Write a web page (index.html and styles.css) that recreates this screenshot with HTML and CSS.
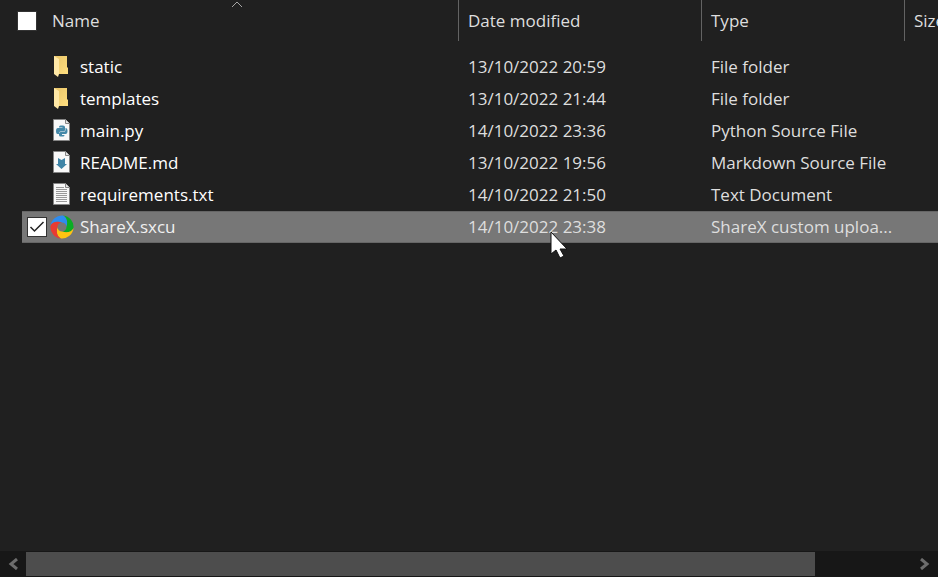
FILE: index.html
```html
<!DOCTYPE html>
<html lang="en">
<head>
<meta charset="utf-8">
<title>Files</title>
<link rel="stylesheet" href="styles.css">
</head>
<body>
<svg class="defs" aria-hidden="true">
  <defs>
    <linearGradient id="fold" x1="0" x2="1" y1="0" y2="1"><stop offset="0" stop-color="#e9c568"/><stop offset="1" stop-color="#ffdf80"/></linearGradient>
    <symbol id="folder" viewBox="-1 0 24 24">
      <path d="M3 1h13v11l1 1v6H3z" fill="url(#fold)"/>
      <path d="M3 1l5 3v15l-1 3-4-3z" fill="#ffe8a6"/>
    </symbol>
    <g id="page">
      <path d="M2.500 1.500h12l4 4v17h-16z" fill="#f8f8f8" stroke="#858585"/>
      <path d="M14.500 1.500v4h4" fill="#e4e4e4" stroke="#858585"/>
    </g>
    <symbol id="python" viewBox="-1 1 24 24">
      <use href="#page"/>
      <path d="M8 9q0-1.500 1.500-1.500h2.500q2 0 2 1.500v3q0 1.500-1.500 1.500H9.500Q8 13.500 8 15v1H6.500Q5 16 5 13t2-3h4.500V9.500H8z" fill="#4488a8"/>
      <path d="M13.500 17q0 1.500-1.500 1.500H9.500Q8 18.500 8 17v-1.500q0-1.500 1.500-1.500H12.500q2 0 2-2V10q2 0 2 3t-2 3H11v1z" fill="#4488a8"/>
    </symbol>
    <symbol id="markdown" viewBox="-1 1 24 24">
      <use href="#page"/>
      <path d="M7 8l3.500 2L14 8v6h2l-5.500 5L5 14h2z" fill="#3f84a6"/>
    </symbol>
    <symbol id="text" viewBox="-1 1 24 24">
      <use href="#page"/>
      <path d="M5 5.500h8M5 7.500h11M5 9.500h11M5 11.500h11M5 13.500h11M5 15.500h11M5 17.500h11M5 19.500h11" stroke="#999"/>
    </symbol>
    <path id="blade" d="M.5 11A11.500 11.500 0 0 1 13 .5C17 2 18 7 16.500 12A4.500 4.500 0 0 0 12 7.500C7 6 2 7 .5 11z"/>
    <symbol id="sharex" viewBox="0 0 24 24">
      <use href="#blade" fill="#2d8cf0"/>
      <use href="#blade" fill="#0aad24" transform="rotate(90 12 12)"/>
      <use href="#blade" fill="#ffc411" transform="rotate(180 12 12)"/>
      <use href="#blade" fill="#e83b32" transform="rotate(270 12 12)"/>
    </symbol>
  </defs>
</svg>
<main class="explorer">
  <div class="list">
    <table class="files">
      <colgroup><col class="c-pick"><col class="c-name"><col class="c-date"><col class="c-type"><col class="c-size"></colgroup>
      <thead>
        <tr>
          <th class="pick"><input type="checkbox" class="all" aria-label="Select all"></th>
          <th class="name">Name<svg class="sort" viewBox="0 0 12 7" aria-hidden="true"><path d="M1 6l5-5 5 5" fill="none" stroke="#a5a5a5"/></svg></th>
          <th class="ruled">Date modified</th>
          <th class="ruled">Type</th>
          <th class="ruled">Size</th>
        </tr>
      </thead>
      <tbody>
        <tr><td class="pick"></td><td class="name"><span class="file"><svg class="icon"><use href="#folder"/></svg>static</span></td><td>13/10/2022 20:59</td><td>File folder</td><td></td></tr>
        <tr><td class="pick"></td><td class="name"><span class="file"><svg class="icon"><use href="#folder"/></svg>templates</span></td><td>13/10/2022 21:44</td><td>File folder</td><td></td></tr>
        <tr><td class="pick"></td><td class="name"><span class="file"><svg class="icon"><use href="#python"/></svg>main.py</span></td><td>14/10/2022 23:36</td><td>Python Source File</td><td></td></tr>
        <tr><td class="pick"></td><td class="name"><span class="file"><svg class="icon"><use href="#markdown"/></svg>README.md</span></td><td>13/10/2022 19:56</td><td>Markdown Source File</td><td></td></tr>
        <tr><td class="pick"></td><td class="name"><span class="file"><svg class="icon"><use href="#text"/></svg>requirements.txt</span></td><td>14/10/2022 21:50</td><td>Text Document</td><td></td></tr>
        <tr class="selected"><td class="pick"><input type="checkbox" checked aria-label="Select ShareX.sxcu"></td><td class="name"><span class="file"><svg class="icon"><use href="#sharex"/></svg>ShareX.sxcu</span></td><td class="pointed">14/10/2022 23:38<svg class="cursor" viewBox="0 0 18 28" aria-hidden="true"><path d="M1 1v22l5-4 4 8 4-2-4-7h7z" fill="#fff" stroke="#111"/></svg></td><td>ShareX custom uploa...</td><td></td></tr>
      </tbody>
    </table>
  </div>
  <div class="scrollbar">
    <button class="arrow" aria-label="Scroll left"><svg viewBox="0 0 10 12"><path d="M9 1L3 6l6 5" /></svg></button>
    <div class="track"><div class="thumb"></div></div>
    <button class="arrow" aria-label="Scroll right"><svg viewBox="0 0 10 12"><path d="M1 1l6 5-6 5" /></svg></button>
  </div>
</main>
</body>
</html>
```
FILE: styles.css
```css
* { box-sizing: border-box; }
body {
  margin: 0;
  background: #202020;
  color: #dedede;
  font: 17px/24px "Open Sans", "Noto Sans", sans-serif;
}
.defs { position: absolute; width: 0; height: 0; }
.explorer { display: flex; flex-direction: column; height: 100vh; }
.list { flex: 1; overflow: hidden; }

.files {
  width: 100%;
  min-width: 938px;
  table-layout: fixed;
  border-collapse: separate;
  border-spacing: 0;
}
.c-pick { width: 50px; }
.c-name { width: 408px; }
.c-date { width: 243px; }
.c-type { width: 203px; }
th, td {
  padding: 0 0 0 10px;
  text-align: left;
  font-weight: 400;
  white-space: nowrap;
}
th { height: 41px; padding-left: 9px; }
td { height: 32px; }
th.ruled { border-left: 1px solid #636363; }
th.name { position: relative; padding-left: 2px; }
td.name { padding-left: 0; color: #fff; }
tbody::before { content: ""; display: block; height: 10px; }
.sort { position: absolute; top: 1px; left: 181px; width: 12px; height: 7px; }
.file { display: flex; align-items: center; gap: 6px; }
.icon { width: 24px; height: 24px; flex: none; }

.pick { padding: 0; }
td.pick { border-left: 22px solid transparent; padding-left: 5px; background-clip: padding-box; }
th.pick { padding-left: 17px; }
input {
  appearance: none;
  display: block;
  width: 20px;
  height: 20px;
  margin: 0;
  border: 1px solid #333;
  background: #fff;
}
input:checked {
  background: #fff url("data:image/svg+xml,%3Csvg xmlns='http://www.w3.org/2000/svg' viewBox='0 0 18 18'%3E%3Cpath d='M2.500 9l4 4 9-9' fill='none' stroke='%23222' stroke-width='1.500'/%3E%3C/svg%3E");
}
.selected td {
  background-color: #777;
  box-shadow: inset 0 1px #666, inset 0 -1px #666;
}
.selected .name { color: #f0f0f0; }
.pointed { position: relative; }
.cursor { position: absolute; left: 92px; top: 20px; width: 18px; height: 28px; }

.scrollbar {
  display: flex;
  height: 26px;
  padding: 1px 0;
  background: #171717;
}
.arrow {
  display: grid;
  place-items: center;
  width: 26px;
  padding: 0;
  border: 0;
  background: none;
}
.arrow svg { width: 10px; height: 12px; fill: none; stroke: #6d6d6d; stroke-width: 3; }
.track { flex: 1; }
.thumb { width: 89%; height: 100%; background: #4d4d4d; }
```
